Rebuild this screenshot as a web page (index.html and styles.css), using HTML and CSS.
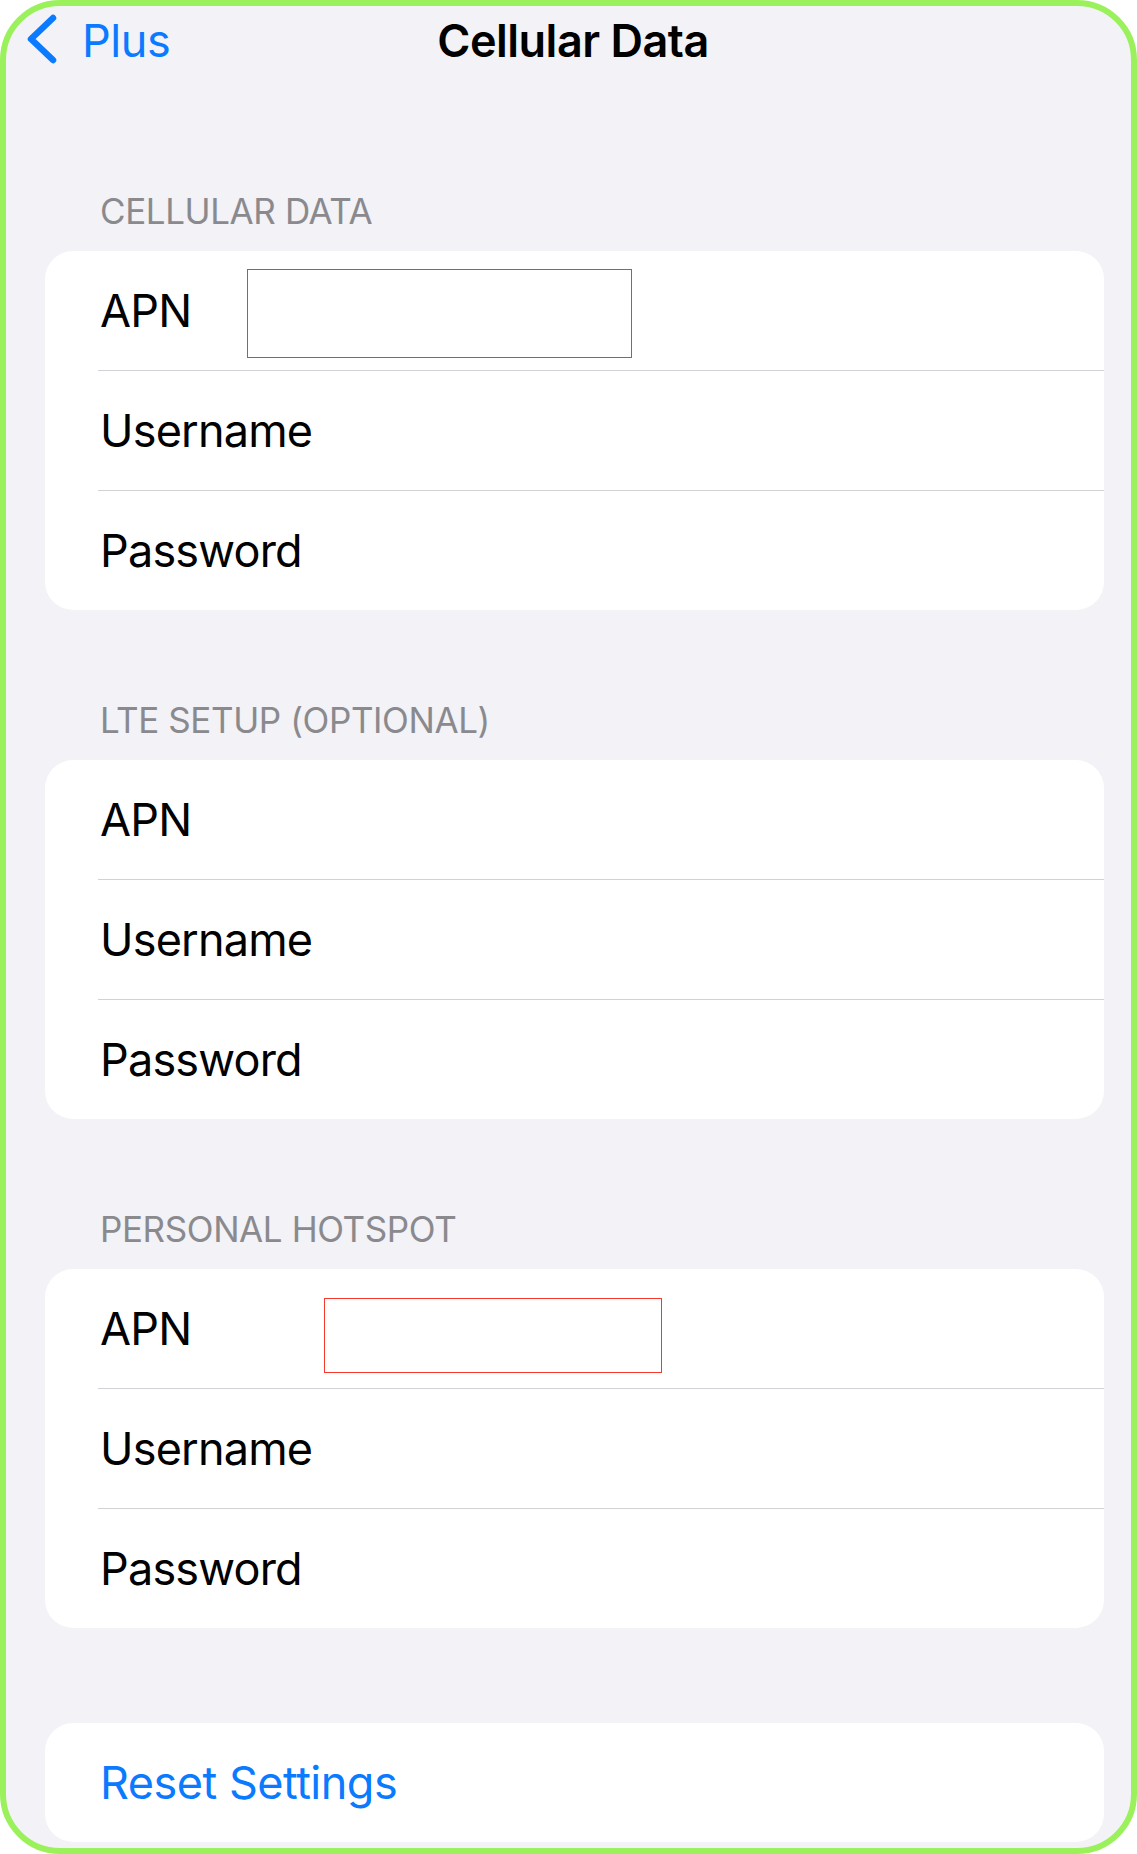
FILE: index.html
```html
<!DOCTYPE html>
<html lang="en">
<head>
<meta charset="utf-8">
<title>Cellular Data</title>
<link rel="stylesheet" href="styles.css">
</head>
<body>
<div class="frame">
  <header class="nav">
    <a class="back" href="#">
      <svg class="chev" width="36" height="54" viewBox="0 0 36 54" aria-hidden="true">
        <path d="M29 4 L7 25 L29 46" fill="none" stroke="#0a7aff" stroke-width="6.5" stroke-linecap="round" stroke-linejoin="round"/>
      </svg>
      <span class="back-label">Plus</span>
    </a>
    <h1 class="title">Cellular Data</h1>
    <span class="nav-spacer"></span>
  </header>

  <main class="content">
    <section class="group">
      <h2 class="group-title">CELLULAR DATA</h2>
      <div class="card">
        <div class="row"><span class="label">APN</span><span class="redact redact-a"></span></div>
        <div class="row"><span class="label">Username</span></div>
        <div class="row"><span class="label">Password</span></div>
      </div>
    </section>

    <section class="group">
      <h2 class="group-title">LTE SETUP (OPTIONAL)</h2>
      <div class="card">
        <div class="row"><span class="label">APN</span></div>
        <div class="row"><span class="label">Username</span></div>
        <div class="row"><span class="label">Password</span></div>
      </div>
    </section>

    <section class="group">
      <h2 class="group-title">PERSONAL HOTSPOT</h2>
      <div class="card">
        <div class="row"><span class="label">APN</span><span class="redact redact-b"></span></div>
        <div class="row"><span class="label">Username</span></div>
        <div class="row"><span class="label">Password</span></div>
      </div>
    </section>

    <section class="group group-reset">
      <div class="card">
        <div class="row"><span class="label link">Reset Settings</span></div>
      </div>
    </section>
  </main>
</div>
</body>
</html>
```
FILE: styles.css
```css
* { box-sizing: border-box; }

html, body {
  margin: 0;
  padding: 0;
  background: #ffffff;
}

body {
  font-family: Inter, "Noto Sans", "Liberation Sans", sans-serif;
  -webkit-font-smoothing: antialiased;
}

.frame {
  width: 1137px;
  height: 1854px;
  border: 6px solid #9bf15b;
  border-radius: 60px;
  background: #f2f2f7;
  overflow: hidden;
  padding-top: 8px;
}

/* Navigation bar */
.nav {
  display: grid;
  grid-template-columns: 1fr auto 1fr;
  align-items: center;
  height: 54px;
  padding: 0 9px 0 18px;
}

.back {
  display: flex;
  align-items: center;
  gap: 22px;
  text-decoration: none;
  color: #0a7aff;
}

.chev { display: block; }

.back-label {
  font-size: 45px;
  line-height: 54px;
  font-weight: 400;
  letter-spacing: -0.4px;
}

.title {
  margin: 0;
  font-size: 45px;
  line-height: 54px;
  font-weight: 600;
  color: #000;
  letter-spacing: -0.5px;
}

/* Content */
.content {
  margin: 122px 27px 0 39px;
  display: flex;
  flex-direction: column;
  gap: 89px;
}

.group-reset { margin-top: 6px; }

.group-title {
  margin: 0 0 19px 0;
  padding-left: 55px;
  font-size: 35px;
  line-height: 42px;
  font-weight: 400;
  color: #8a8a8e;
  letter-spacing: -0.4px;
}

.card {
  background: #ffffff;
  border-radius: 28px;
  overflow: hidden;
}

.row {
  position: relative;
  height: 119px;
  display: flex;
  align-items: center;
  padding-left: 55px;
}

.row + .row::before {
  content: "";
  position: absolute;
  top: -1px;
  left: 53px;
  right: 0;
  height: 1px;
  background: #d1d1d6;
}

.row + .row { margin-top: 1px; }

.label {
  font-size: 45px;
  line-height: 54px;
  color: #000;
  letter-spacing: -0.8px;
}

.label.link { color: #0a7aff; letter-spacing: -0.5px; }

/* Red annotation boxes drawn over the rows */
.redact {
  position: absolute;
  border: 1.5px solid #f5392c;
}

.redact-a {
  left: 202px;
  top: 18px;
  width: 385px;
  height: 89px;
}

.redact-b {
  left: 279px;
  top: 29px;
  width: 338px;
  height: 75px;
}
```
